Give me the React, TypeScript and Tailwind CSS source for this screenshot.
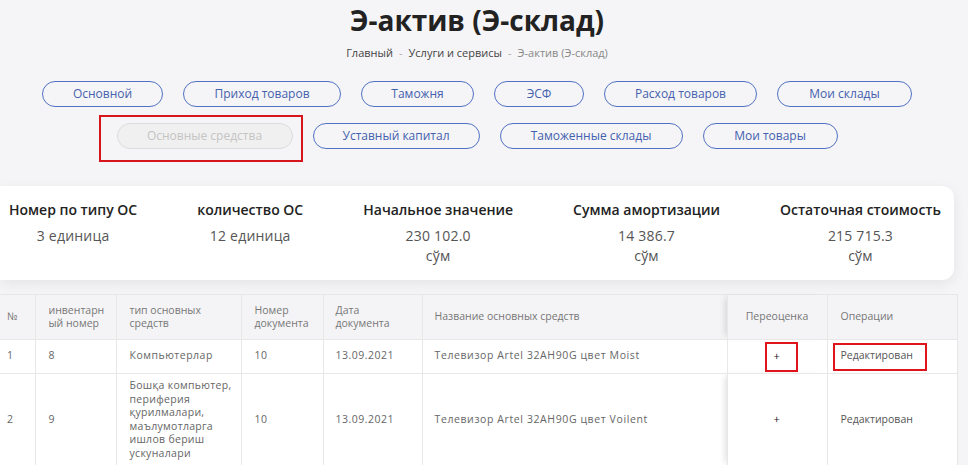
import React from "react";

const row1 = [
  { t: "Основной", w: "w-[121px]" },
  { t: "Приход товаров", w: "w-[158px]" },
  { t: "Таможня", w: "w-[113px]" },
  { t: "ЭСФ", w: "w-[90px]" },
  { t: "Расход товаров", w: "w-[153px]" },
  { t: "Мои склады", w: "w-[135px]" },
];
const row2 = [
  { t: "Уставный капитал", w: "w-[167px]" },
  { t: "Таможенные склады", w: "w-[183px]" },
  { t: "Мои товары", w: "w-[135px]" },
];

function Btn({ t, w }: { t: string; w: string }) {
  return (
    <div
      className={`${w} h-[26px] rounded-full border border-[#5271c4] flex items-center justify-center text-[12px] text-[#4461ae]`}
    >
      {t}
    </div>
  );
}

const stats = [
  { h: "Номер по типу ОС", v: "3 единица", s: "" },
  { h: "количество ОС", v: "12 единица", s: "" },
  { h: "Начальное значение", v: "230 102.0", s: "сўм" },
  { h: "Сумма амортизации", v: "14 386.7", s: "сўм" },
  { h: "Остаточная стоимость", v: "215 715.3", s: "сўм" },
];

const typeLines = ["Бошқа компьютер,", "периферия", "қурилмалари,", "маълумотларга", "ишлов бериш", "ускуналари"];

export default function App() {
  return (
    <div
      className="w-[968px] h-[465px] overflow-hidden bg-[#f5f5f7]"
      style={{ fontFamily: '"Open Sans", "Noto Sans", sans-serif' }}
    >
      <div className="w-[954px]">
        <h1 className="pt-[2px] text-center text-[28px] leading-[36px] font-bold text-[#222]">
          Э-актив (Э-склад)
        </h1>
        <div className="mt-[8px] flex justify-center text-[11px] leading-[14px]">
          <span className="text-[#444]">Главный</span>
          <span className="px-[6px] text-[#aaa]">-</span>
          <span className="text-[#444]">Услуги и сервисы</span>
          <span className="px-[6px] text-[#aaa]">-</span>
          <span className="text-[#888]">Э-актив (Э-склад)</span>
        </div>
        <div className="mt-[21px] flex justify-center gap-[20px]">
          {row1.map((b) => (
            <Btn key={b.t} {...b} />
          ))}
        </div>
        <div className="mt-[16px] flex justify-center gap-[20px]">
          <div className="relative">
            <div className="w-[176px] h-[26px] rounded-full border border-[#dcdcdc] bg-[#f0f0f0] flex items-center justify-center text-[12px] text-[#c4c4c4]">
              Основные средства
            </div>
            <div className="absolute left-[-18px] top-[-8px] w-[204px] h-[47px] border-2 border-[#d6161c]" />
          </div>
          {row2.map((b) => (
            <Btn key={b.t} {...b} />
          ))}
        </div>
        <div className="mt-[37px] h-[94px] bg-white rounded-r-[12px] shadow-[0_4px_14px_rgba(0,0,0,0.07)] flex justify-between pl-[9px] pr-[13px] pt-[14px]">
          {stats.map((s) => (
            <div key={s.h} className="flex flex-col items-center">
              <div className="text-[14px] leading-[20px] font-semibold text-[#222] whitespace-nowrap">
                {s.h}
              </div>
              <div className="mt-[6px] text-[14px] leading-[20px] tracking-[0.2px] text-[#555]">{s.v}</div>
              {s.s && (
                <div className="text-[14px] leading-[20px] tracking-[0.2px] text-[#555]">{s.s}</div>
              )}
            </div>
          ))}
        </div>
        <div className="mt-[14px] bg-white border-t border-r border-[#e6e6e6] w-[958px]">
          <table className="table-fixed border-collapse w-full text-[10.5px] text-[#666]">
            <colgroup>
              <col className="w-[35px]" />
              <col className="w-[81px]" />
              <col className="w-[125px]" />
              <col className="w-[82px]" />
              <col className="w-[99px]" />
              <col className="w-[305px]" />
              <col className="w-[100px]" />
              <col />
            </colgroup>
            <thead>
              <tr className="h-[44px] bg-[#f4f4f6] text-[#777] text-left align-middle">
                <th className="font-normal pl-[7px] border-r border-[#e8e8e8]">№</th>
                <th className="font-normal px-[13px] leading-[12.6px] border-r border-[#e8e8e8]">
                  инвентарн
                  <br />
                  ый номер
                </th>
                <th className="font-normal px-[13px] leading-[12.6px] border-r border-[#e8e8e8]">
                  тип основных
                  <br />
                  средств
                </th>
                <th className="font-normal px-[13px] leading-[12.6px] border-r border-[#e8e8e8]">
                  Номер
                  <br />
                  документа
                </th>
                <th className="font-normal px-[12px] leading-[12.6px] border-r border-[#e8e8e8]">
                  Дата
                  <br />
                  документа
                </th>
                <th className="font-normal px-[12px]">Название основных средств</th>
                <th className="font-normal text-center border-l border-r border-[#e8e8e8] shadow-[-5px_0_6px_-3px_rgba(0,0,0,0.12)]">
                  Переоценка
                </th>
                <th className="font-normal px-[13px]">Операции</th>
              </tr>
            </thead>
            <tbody className="tracking-[0.5px]">
              <tr className="h-[34px] border-t border-[#e8e8e8]">
                <td className="pl-[7px] border-r border-[#e8e8e8]">1</td>
                <td className="px-[13px] border-r border-[#e8e8e8]">8</td>
                <td className="px-[13px] border-r border-[#e8e8e8]">Компьютерлар</td>
                <td className="px-[13px] border-r border-[#e8e8e8]">10</td>
                <td className="px-[12px] border-r border-[#e8e8e8]">13.09.2021</td>
                <td className="px-[12px] tracking-[0.6px]">Телевизор Artel 32AH90G цвет Moist</td>
                <td className="relative text-center border-l border-r border-[#e8e8e8] shadow-[-5px_0_6px_-3px_rgba(0,0,0,0.12)]">
                  <span className="text-[11px] text-[#222]">+</span>
                  <div className="absolute left-[37px] top-[2px] w-[33px] h-[30px] border-2 border-[#e0141b]" />
                </td>
                <td className="relative px-[13px] tracking-normal text-[#555]">
                  Редактирован
                  <div className="absolute left-[5px] top-[3px] w-[94px] h-[28px] border-2 border-[#e0141b]" />
                </td>
              </tr>
              <tr className="h-[93px] border-t border-[#e8e8e8]">
                <td className="pl-[7px] border-r border-[#e8e8e8]">2</td>
                <td className="px-[13px] border-r border-[#e8e8e8]">9</td>
                <td className="px-[13px] border-r border-[#e8e8e8] leading-[13.5px] py-[5px] tracking-[0.3px] whitespace-nowrap">
                  {typeLines.map((l, i) => (
                    <div key={i}>{l}</div>
                  ))}
                </td>
                <td className="px-[13px] border-r border-[#e8e8e8]">10</td>
                <td className="px-[12px] border-r border-[#e8e8e8]">13.09.2021</td>
                <td className="px-[12px] tracking-[0.6px]">Телевизор Artel 32AH90G цвет Voilent</td>
                <td className="text-center border-l border-r border-[#e8e8e8] shadow-[-5px_0_6px_-3px_rgba(0,0,0,0.12)]">
                  <span className="text-[11px] text-[#222]">+</span>
                </td>
                <td className="px-[13px] tracking-normal text-[#555]">Редактирован</td>
              </tr>
            </tbody>
          </table>
        </div>
      </div>
    </div>
  );
}
